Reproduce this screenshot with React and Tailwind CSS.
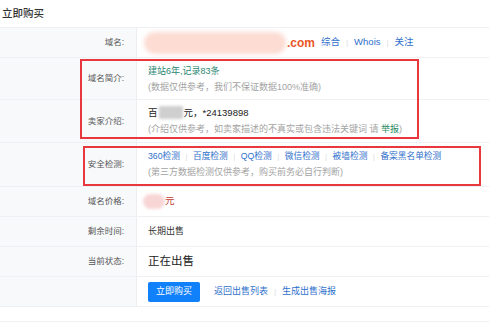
import React from "react";

const Sep = ({ m = "mx-[6px]" }) => <span className={`${m} text-[#d8dce2] text-[8px]`}>|</span>;

function Row({ label, h, children }) {
  return (
    <div className={`flex ${h} border-b border-[#eef0f3]`}>
      <div className="w-[137px] shrink-0 bg-[#f8f9fb] border-r border-[#eceef1] flex items-center justify-end pr-[12px] text-[8.5px] text-[#555]">
        {label}
      </div>
      <div className="flex-1 pl-[11px] flex flex-col justify-center">{children}</div>
    </div>
  );
}

export default function App() {
  const checks = ["360检测", "百度检测", "QQ检测", "微信检测", "被墙检测", "备案黑名单检测"];

  return (
    <div
      className="relative w-[489px] h-[323px] bg-white overflow-hidden text-[#333]"
      style={{ fontFamily: '"Liberation Sans", "Noto Sans CJK SC", sans-serif' }}
    >
      {/* title */}
      <div className="h-[28px] border-b border-[#eef0f3] flex items-center pl-[2px] text-[10.5px] font-medium text-[#333]">
        立即购买
      </div>

      <Row label="域名:" h="h-[30px]">
        <div className="flex items-center">
          <span className="inline-block w-[142px] h-[22px] rounded-full bg-[#fcdcd3] blur-[2px] -ml-[4px] mr-[1px]" />
          <span className="text-[12px] font-bold text-[#ea561f]">.com</span>
          <span className="ml-[6px] text-[9.5px] text-[#2f6fcc]">综合</span>
          <Sep />
          <span className="text-[9.5px] text-[#2f6fcc]">Whois</span>
          <Sep />
          <span className="text-[9.5px] text-[#2f6fcc]">关注</span>
        </div>
      </Row>

      <Row label="域名简介:" h="h-[42px]">
        <div className="text-[9px] leading-[16px] text-[#2a8672]">建站6年,记录83条</div>
        <div className="text-[9px] leading-[16px] text-[#a3a3a3]">(数据仅供参考，我们不保证数据100%准确)</div>
      </Row>

      <Row label="卖家介绍:" h="h-[43px]">
        <div className="flex items-center text-[9.5px] leading-[17px] text-[#222]">
          百
          <span className="inline-block w-[24px] h-[13px] bg-[#cfcfcf] blur-[1.5px] mx-[1px]" />
          元，*24139898
        </div>
        <div className="text-[9px] leading-[17px] text-[#a3a3a3]">
          (介绍仅供参考，如卖家描述的不真实或包含违法关键词 请 <span className="text-[#2a8a5e]">举报</span>)
        </div>
      </Row>

      <Row label="安全检测:" h="h-[44px]">
        <div className="flex items-center text-[8.7px] leading-[15px] text-[#2f6fcc]">
          {checks.map((c, i) => (
            <React.Fragment key={c}>
              {i > 0 && <Sep m="mx-[5.5px]" />}
              <span>{c}</span>
            </React.Fragment>
          ))}
        </div>
        <div className="text-[9px] leading-[16px] text-[#a3a3a3]">(第三方数据检测仅供参考，购买前务必自行判断)</div>
      </Row>

      <Row label="域名价格:" h="h-[30px]">
        <div className="flex items-center">
          <span className="inline-block w-[22px] h-[15px] rounded-full bg-[#f8d6d6] blur-[1.5px] -ml-[5px]" />
          <span className="text-[9.5px] text-[#c0392b]">元</span>
        </div>
      </Row>

      <Row label="剩余时间:" h="h-[30px]">
        <div className="text-[9px] text-[#333]">长期出售</div>
      </Row>

      <Row label="当前状态:" h="h-[30px]">
        <div className="text-[11.5px] text-[#222]">正在出售</div>
      </Row>

      <Row label="" h="h-[30px]">
        <div className="flex items-center">
          <button className="w-[52px] h-[20px] rounded-[2px] bg-[#1180fb] text-white text-[9px]">立即购买</button>
          <span className="ml-[14px] text-[9px] text-[#2f6fcc]">返回出售列表</span>
          <Sep />
          <span className="text-[9px] text-[#2f6fcc]">生成出售海报</span>
        </div>
      </Row>

      <div className="mt-[14px] border-t border-[#eef0f3]" />

      {/* annotation boxes */}
      <div className="absolute left-[80px] top-[59px] w-[339px] h-[80px] border-2 border-[#e8383d]" />
      <div className="absolute left-[83px] top-[146px] w-[398px] h-[40px] border-2 border-[#e8383d]" />
    </div>
  );
}
